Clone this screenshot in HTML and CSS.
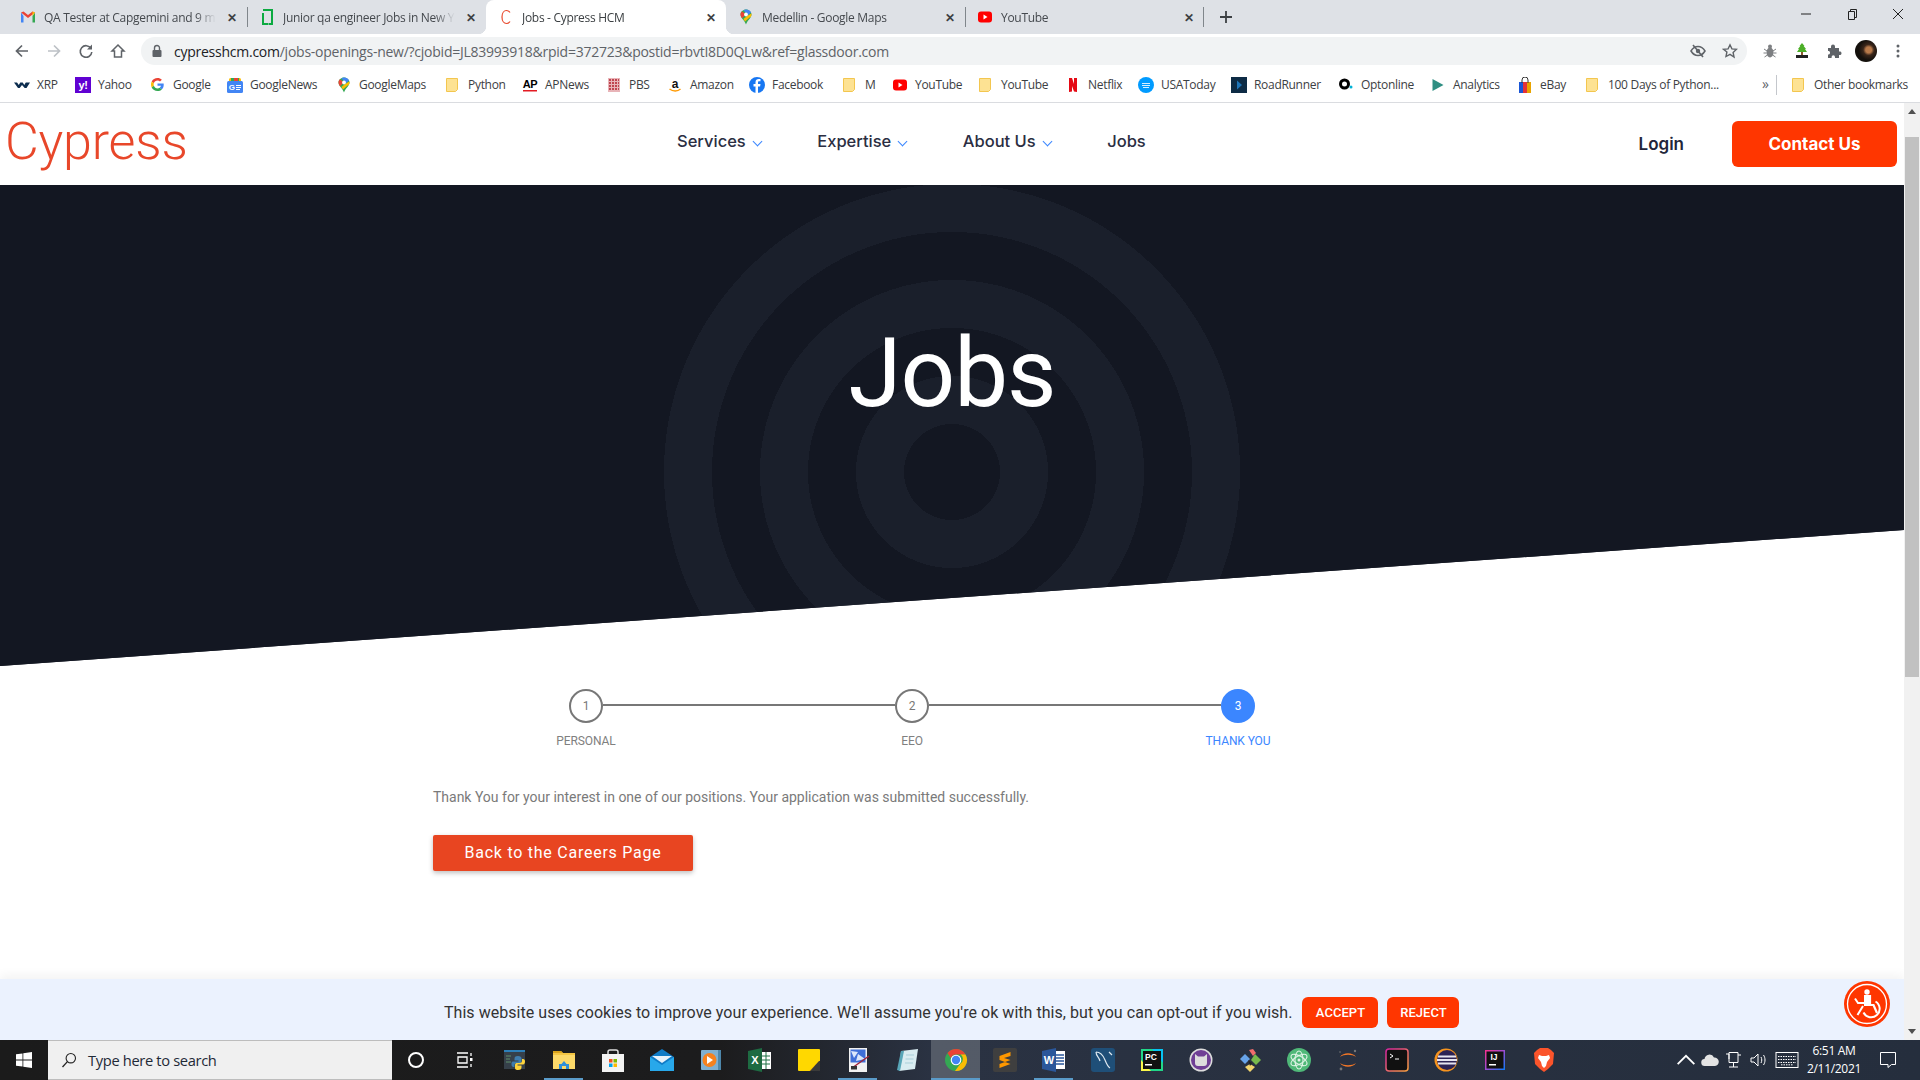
FILE: index.html
```html
<!DOCTYPE html>
<html lang="en">
<head>
    <meta charset="UTF-8">
    <title>Jobs - Cypress HCM</title>
    <link rel="stylesheet" href="styles.css">
</head>
<body>

<svg class="defs" width="0" height="0">
    <symbol id="folder" viewBox="0 0 16 16"><path d="M1.500 1.500h11v11l-2 2h-9z" fill="#fde293" stroke="#f3c64f"/></symbol>
    <symbol id="yt" viewBox="0 0 16 16"><rect x="1" y="2.500" width="14" height="11" rx="3" fill="#f00"/><path d="M6.500 5.500l4 2.500-4 2.500z" fill="#fff"/></symbol>
    <symbol id="gmaps" viewBox="0 0 16 16"><path d="M8 .5C5 .5 2.500 2.900 2.500 5.500c0 3.600 4 5.500 5.500 10 1.500-4.500 5.500-6.400 5.500-10C13.500 2.900 11 .5 8 .5z" fill="#34a853"/><path d="M3.900 2.300L8 5.500 4 9.200C3 7.800 2.500 6.700 2.500 5.500c0-1.300.5-2.300 1.400-3.200z" fill="#ea4335"/><path d="M5.500 1.200C6.200.7 7 .5 8 .5c2.400 0 4.300 1.300 5 3L9.800 6.400z" fill="#4285f4"/><path d="M5.400 10.100L9.800 6.400 13.300 4.500c.3.900.3 1.700-.2 2.800L7 12.500z" fill="#fbbc04"/><circle cx="8" cy="5.500" r="1.900" fill="#fff"/></symbol>
    <symbol id="g" viewBox="0 0 48 48"><path fill="#EA4335" d="M24 9.500c3.540 0 6.710 1.220 9.210 3.600l6.850-6.850C35.900 2.380 30.470 0 24 0 14.620 0 6.510 5.380 2.560 13.220l7.980 6.190C12.430 13.720 17.740 9.500 24 9.500z"/><path fill="#4285F4" d="M46.980 24.550c0-1.570-.15-3.090-.38-4.550H24v9.020h12.940c-.58 2.960-2.260 5.480-4.780 7.180l7.730 6c4.510-4.180 7.090-10.360 7.090-17.650z"/><path fill="#FBBC05" d="M10.530 28.590c-.48-1.450-.76-2.990-.76-4.590s.27-3.140.76-4.590l-7.980-6.190C.92 16.460 0 20.120 0 24c0 3.880.92 7.540 2.560 10.780l7.970-6.190z"/><path fill="#34A853" d="M24 48c6.480 0 11.930-2.130 15.890-5.810l-7.730-6c-2.150 1.450-4.920 2.300-8.160 2.300-6.260 0-11.570-4.220-13.470-9.910l-7.980 6.190C6.510 42.620 14.620 48 24 48z"/></symbol>
</svg>

<div class="screen">

    <div class="tabstrip">
        <div class="tab">
            <svg class="fav" viewBox="0 0 16 16"><path d="M1 3.500v10h2.500V7z" fill="#4285f4"/><path d="M12.500 7v6.500H15v-10z" fill="#34a853"/><path d="M1 3.500L8 9l7-5.500-2.500-1L8 6 3.500 2.500z" fill="#ea4335"/><path d="M12.500 2.500L15 3.500 12.500 7z" fill="#fbbc04"/></svg>
            <span class="tab-title">QA Tester at Capgemini and 9 m</span>
            <span class="tab-x">&#10005;</span>
        </div>
        <div class="tab sep-left">
            <svg class="fav" viewBox="0 0 16 16"><path d="M4 1h9v14H9.500M9 15H4V4" fill="none" stroke="#0caa41" stroke-width="2"/></svg>
            <span class="tab-title">Junior qa engineer Jobs in New Y</span>
            <span class="tab-x">&#10005;</span>
        </div>
        <div class="tab tab-active">
            <svg class="fav" viewBox="0 0 16 16"><path d="M12 3.500C11 2 9.800 1.500 8.500 1.500 6 1.500 4 4 4 8s2 6.500 4.500 6.500c1.300 0 2.500-.5 3.500-2" fill="none" stroke="#e8472a" stroke-width="1.200"/></svg>
            <span class="tab-title">Jobs - Cypress HCM</span>
            <span class="tab-x">&#10005;</span>
        </div>
        <div class="tab">
            <svg class="fav"><use href="#gmaps"/></svg>
            <span class="tab-title">Medellin - Google Maps</span>
            <span class="tab-x">&#10005;</span>
        </div>
        <div class="tab sep-left sep-right">
            <svg class="fav"><use href="#yt"/></svg>
            <span class="tab-title">YouTube</span>
            <span class="tab-x">&#10005;</span>
        </div>
        <svg class="new-tab" viewBox="0 0 14 14"><path d="M7 1v12M1 7h12" stroke="#3c4043" stroke-width="1.800"/></svg>
        <div class="win-controls">
            <svg viewBox="0 0 12 12"><path d="M1 6h10" stroke="#222" stroke-width="1"/></svg>
            <svg viewBox="0 0 12 12"><path d="M2.500 3.500h6v8h-6zM4.500 3.500v-2h6v8h-2" fill="none" stroke="#222"/></svg>
            <svg viewBox="0 0 12 12"><path d="M1 1l10 10M11 1L1 11" stroke="#222"/></svg>
        </div>
    </div>

    <div class="toolbar">
        <div class="tool"><svg viewBox="0 0 16 16"><path d="M14 8H3M8 2.500L2.500 8 8 13.500" fill="none" stroke="#5f6368" stroke-width="1.700"/></svg></div>
        <div class="tool"><svg viewBox="0 0 16 16"><path d="M2 8h11M8 2.500L13.500 8 8 13.500" fill="none" stroke="#bdc1c6" stroke-width="1.700"/></svg></div>
        <div class="tool"><svg viewBox="0 0 16 16"><path d="M13 5.500A5.800 5.800 0 1 0 13.800 9" fill="none" stroke="#5f6368" stroke-width="1.600"/><path d="M14 1.500v5H9z" fill="#5f6368"/></svg></div>
        <div class="tool"><svg viewBox="0 0 16 16"><path d="M8 2L2 8h2.500v6h7V8H14z" fill="none" stroke="#5f6368" stroke-width="1.500"/></svg></div>
        <div class="omnibox">
            <svg class="lock" viewBox="0 0 16 16"><rect x="3.500" y="7" width="9" height="7" rx="1" fill="#5f6368"/><path d="M5.500 7V5a2.500 2.500 0 0 1 5 0v2" fill="none" stroke="#5f6368" stroke-width="1.400"/></svg>
            <span class="url"><b>cypresshcm.com</b>/jobs-openings-new/?cjobid=JL83993918&amp;rpid=372723&amp;postid=rbvtI8D0QLw&amp;ref=glassdoor.com</span>
            <svg class="omni-icon first" viewBox="0 0 16 16"><path d="M1 8c1.800-3 4-4.500 7-4.500s5.200 1.500 7 4.500c-1.800 3-4 4.500-7 4.500S2.800 11 1 8z" fill="none" stroke="#5f6368" stroke-width="1.500"/><circle cx="8" cy="8" r="2.200" fill="#5f6368"/><path d="M3 2l10 12" stroke="#5f6368" stroke-width="1.600"/></svg>
            <svg class="omni-icon" viewBox="0 0 16 16"><path d="M8 1.800l1.900 4.100 4.500.5-3.300 3.100.9 4.500L8 11.300l-4 2.200.9-4.500L1.600 6.400l4.500-.5z" fill="none" stroke="#5f6368" stroke-width="1.400"/></svg>
        </div>
        <div class="tool"><svg viewBox="0 0 16 16"><ellipse cx="8" cy="9.500" rx="3.500" ry="5" fill="#7d7f82"/><circle cx="8" cy="3.500" r="2" fill="#7d7f82"/><path d="M2 6l3 2M14 6l-3 2M1.500 10h3M14.500 10h-3M2.500 14l3-2M13.500 14l-3-2" stroke="#7d7f82"/></svg></div>
        <div class="tool"><svg viewBox="0 0 16 16"><path d="M8 0l2.500 3H9.700l2.300 3h-1l2 3H3l2-3H4l2.300-3h-.8z" fill="#4caf28"/><rect x="7" y="9" width="2" height="3" fill="#8a5a2b"/><rect x="2" y="12" width="12" height="3" fill="#222"/></svg></div>
        <div class="tool"><svg viewBox="0 0 16 16"><path d="M2 5h3V3.500a2 2 0 0 1 4 0V5h4v3.500h1.500a2 2 0 0 1 0 3.500H13v3H9v-1a1.700 1.700 0 0 0-3.400 0v1H2v-3.500h1a2 2 0 0 0 0-3.500H2z" fill="#5f6368"/></svg></div>
        <div class="tool"><div class="avatar"></div></div>
        <div class="tool"><svg viewBox="0 0 16 16"><circle cx="8" cy="3" r="1.500" fill="#5f6368"/><circle cx="8" cy="8" r="1.500" fill="#5f6368"/><circle cx="8" cy="13" r="1.500" fill="#5f6368"/></svg></div>
    </div>

    <div class="bookmarks">
        <div class="bm"><svg viewBox="0 0 16 16"><path d="M0 5.500h3l1.800 2.500L6.300 5.500h2.400l1.600 2.500 1.500-2.500H16l-3.500 5.500h-1.800L8 8l-2.300 3H4z" fill="#0c2d4e"/></svg><span>XRP</span></div>
        <div class="bm"><svg viewBox="0 0 16 16"><rect width="16" height="16" fill="#6001d2"/><text x="8" y="12" font-size="11" text-anchor="middle" fill="#fff">y!</text></svg><span>Yahoo</span></div>
        <div class="bm"><svg viewBox="0 0 16 16"><use href="#g" x="1" y="1" width="13" height="13"/></svg><span>Google</span></div>
        <div class="bm"><svg viewBox="0 0 16 16"><path d="M2 5V2.500Q2 1 3.500 1h9Q14 1 14 2.500V5z" fill="#fbbc04"/><path d="M4 5V1h8v4z" fill="#34a853"/><path d="M7 4V1h4v3z" fill="#ea4335"/><rect y="4" width="16" height="12" rx="1.500" fill="#4285f4"/><text x="4.800" y="13" font-size="8" text-anchor="middle" fill="#fff">G</text><path d="M9 8.500h5M9 10.500h5M9 12.500h4" stroke="#fff"/></svg><span>GoogleNews</span></div>
        <div class="bm"><svg><use href="#gmaps"/></svg><span>GoogleMaps</span></div>
        <div class="bm"><svg><use href="#folder"/></svg><span>Python</span></div>
        <div class="bm"><svg viewBox="0 0 16 16"><text x="8" y="11" font-size="11" text-anchor="middle" fill="#000">AP</text><rect x="1" y="13" width="14" height="1.500" fill="#e31b23"/></svg><span>APNews</span></div>
        <div class="bm"><svg viewBox="0 0 16 16"><rect x="2" y="1" width="12" height="14" fill="#e8b4b8"/><path d="M3 3h10M3 6h10M3 9h10M3 12h10" stroke="#b3202d" stroke-width="1.500" stroke-dasharray="2 1"/></svg><span>PBS</span></div>
        <div class="bm"><svg viewBox="0 0 16 16"><text x="8" y="10.500" font-size="12" text-anchor="middle" fill="#111">a</text><path d="M2.500 12c3.500 2.500 8 2.500 11 0" fill="none" stroke="#f90" stroke-width="1.500"/></svg><span>Amazon</span></div>
        <div class="bm"><svg viewBox="0 0 16 16"><circle cx="8" cy="8" r="8" fill="#1877f2"/><path d="M9 16V9.500h2.100l.4-2.500H9V5.500c0-.8.3-1.200 1.200-1.200h1.300V2.100C11 2 10.400 2 9.800 2 7.800 2 6.500 3.200 6.500 5.200V7H4.500v2.500h2V16z" fill="#fff"/></svg><span>Facebook</span></div>
        <div class="bm"><svg><use href="#folder"/></svg><span>M</span></div>
        <div class="bm"><svg><use href="#yt"/></svg><span>YouTube</span></div>
        <div class="bm"><svg><use href="#folder"/></svg><span>YouTube</span></div>
        <div class="bm"><svg viewBox="0 0 16 16"><path d="M4 1h3l2 6V1h3v14l-3-.5L7 9v5.500L4 15z" fill="#e50914"/></svg><span>Netflix</span></div>
        <div class="bm"><svg viewBox="0 0 16 16"><circle cx="8" cy="8" r="8" fill="#009bff"/><path d="M4 6.500h8M4 8.500h8M5 10.500h6" stroke="#d6efff"/></svg><span>USAToday</span></div>
        <div class="bm"><svg viewBox="0 0 16 16"><rect width="16" height="16" fill="#0d2b45"/><path d="M6 3.500l5 4.500-5 4.500z" fill="#1d74b8"/></svg><span>RoadRunner</span></div>
        <div class="bm"><svg viewBox="0 0 16 16"><circle cx="6.500" cy="7" r="4" fill="none" stroke="#000" stroke-width="3"/><circle cx="13" cy="10" r="1.500" fill="#00b2d6"/></svg><span>Optonline</span></div>
        <div class="bm"><svg viewBox="0 0 16 16"><path d="M2.500 2l11 6-11 6z" fill="#2f8f83"/></svg><span>Analytics</span></div>
        <div class="bm"><svg viewBox="0 0 16 16"><rect x="2" y="5" width="4" height="11" fill="#1a56d6"/><rect x="6" y="5" width="4" height="11" fill="#e53238"/><rect x="10" y="5" width="4" height="11" fill="#e9a400"/><path d="M5 6V3a3 3 0 0 1 6 0v3" fill="none" stroke="#333"/></svg><span>eBay</span></div>
        <div class="bm"><svg><use href="#folder"/></svg><span>100 Days of Python...</span></div>
        <div class="bm-more">&raquo;</div>
        <div class="bm-sep"></div>
        <div class="bm"><svg><use href="#folder"/></svg><span>Other bookmarks</span></div>
    </div>

    <div class="viewport">
        <div class="page">
            <header class="site-header">
                <a class="logo">Cypress</a>
                <nav class="site-nav">
                    <a>Services<i class="caret"></i></a>
                    <a>Expertise<i class="caret"></i></a>
                    <a>About Us<i class="caret"></i></a>
                    <a>Jobs</a>
                </nav>
                <a class="login">Login</a>
                <a class="btn-contact">Contact Us</a>
            </header>

            <section class="hero">
                <h1>Jobs</h1>
            </section>

            <main class="content">
                <div class="stepper">
                    <div class="step-track">
                        <span class="step-dot">1</span>
                        <span class="step-line"></span>
                        <span class="step-dot">2</span>
                        <span class="step-line"></span>
                        <span class="step-dot current">3</span>
                    </div>
                    <div class="step-labels">
                        <span>PERSONAL</span>
                        <span>EEO</span>
                        <span class="current">THANK YOU</span>
                    </div>
                </div>
                <p class="thanks">Thank You for your interest in one of our positions. Your application was submitted successfully.</p>
                <a class="btn-back">Back to the Careers Page</a>
            </main>

            <div class="cookie-bar">
                <span>This website uses cookies to improve your experience. We'll assume you're ok with this, but you can opt-out if you wish.</span>
                <a class="cookie-btn accept">ACCEPT</a>
                <a class="cookie-btn">REJECT</a>
            </div>

            <div class="a11y">
                <svg viewBox="0 0 46 46">
                    <circle cx="23" cy="23" r="23" fill="#ff3600"/>
                    <circle cx="23" cy="23" r="19.500" fill="none" stroke="#fff" stroke-width="1.300"/>
                    <circle cx="23" cy="11" r="2.700" fill="#fff"/>
                    <path d="M20 15h6v9h3.500l3.500 8" fill="none" stroke="#fff" stroke-width="2.200"/>
                    <path d="M20 15h5v10h-5z" fill="#fff"/>
                    <path d="M11 17.500l3 4.500h6M19 25l-5.500 9" fill="none" stroke="#fff" stroke-width="2"/>
                    <path d="M31.500 20.500a8.500 8.500 0 1 1-12 11" fill="none" stroke="#fff" stroke-width="2"/>
                </svg>
            </div>
        </div>
        <div class="scrollbar">
            <span class="arrow-up"></span>
            <div class="scroll-track"><div class="scroll-thumb"></div></div>
            <span class="arrow-down"></span>
        </div>
    </div>

    <div class="taskbar">
        <div class="start"><svg viewBox="0 0 16 16"><path d="M0 2.300l6.500-.9v6.200H0zM7.300 1.300L16 0v7.600H7.300zM0 8.400h6.500v6.200L0 13.700zM7.300 8.400H16V16l-8.700-1.200z" fill="#fff"/></svg></div>
        <div class="search">
            <svg viewBox="0 0 16 16"><circle cx="9.800" cy="6.200" r="4.700" fill="none" stroke="#222" stroke-width="1.100"/><path d="M6.400 9.600L1.500 15" stroke="#222" stroke-width="1.300"/></svg>
            <span>Type here to search</span>
        </div>
        <div class="task-apps">
            <div class="app"><svg viewBox="0 0 24 24"><circle cx="12" cy="12" r="7" fill="none" stroke="#fff" stroke-width="2"/></svg></div>
            <div class="app spaced"><svg viewBox="0 0 24 24"><path d="M5 5h11M5 19h11M6 9h9v6H6zM19 5v3M19 16v3" fill="none" stroke="#fff" stroke-width="1.300"/><rect x="18" y="10" width="2.500" height="3" fill="#fff"/></svg></div>
            <div class="app"><svg viewBox="0 0 24 24"><rect x="1" y="2" width="21" height="19" fill="#36404a"/><rect x="1" y="2" width="21" height="2" fill="#2d7fb8"/><path d="M3 8h5M3 11h4M3 14h5" stroke="#5e8f6a"/><path d="M15 8c-3 0-3.500 1-3.500 3v1.500h4v1h-5.500c-1.500 0-1.500 1.500-1.500 3s.7 2.500 2 2.500h1v-2c0-1 1-2 2.500-2h3c1 0 1.500-1 1.500-2v-2.500C18.500 9 17.500 8 15 8z" fill="#3f7cad"/><path d="M15 22c3 0 3.500-1 3.500-3v-1.500h-4v-1h5.500c1.500 0 2-1.500 2-3s-.7-2.500-2-2.500h-1v2c0 1-1 2-2.500 2h-3c-1 0-1.500 1-1.500 2V20c0 1.500 1 2 3.500 2z" fill="#ffd43b"/></svg></div>
            <div class="app running"><svg viewBox="0 0 24 24"><path d="M1 3h8l2 2h12v16H1z" fill="#f4c542"/><path d="M1 3h8l2 2H1z" fill="#d9a21b"/><path d="M1 7h22v14H1z" fill="#fcd969"/><path d="M7 21v-5h2.500l2.500-3 2.500 3H17v5h-3v-3h-4v3z" fill="#2f8fd8"/></svg></div>
            <div class="app"><svg viewBox="0 0 24 24"><path d="M7 7V4a2 2 0 0 1 2-2h6a2 2 0 0 1 2 2v3" fill="none" stroke="#ddd" stroke-width="1.500"/><rect x="1" y="6" width="22" height="18" fill="#f3f3f3"/><rect x="8" y="11" width="3.500" height="3.500" fill="#f25022"/><rect x="12.500" y="11" width="3.500" height="3.500" fill="#7fba00"/><rect x="8" y="15.500" width="3.500" height="3.500" fill="#00a4ef"/><rect x="12.500" y="15.500" width="3.500" height="3.500" fill="#ffb900"/></svg></div>
            <div class="app"><svg viewBox="0 0 24 24"><path d="M0 9l12-8 12 8v14H0z" fill="#0f7bc6"/><path d="M0 9l12 8 12-8v14H0z" fill="#28a8ea"/><path d="M2 8h20l-10 7z" fill="#e6f2fb"/></svg></div>
            <div class="app"><svg viewBox="0 0 24 24"><rect x="2" y="2" width="20" height="20" rx="1" fill="#7fb0d1"/><rect x="19" y="2" width="3" height="20" fill="#4e87ab"/><circle cx="10.500" cy="12" r="7" fill="#f5821f"/><path d="M8 8l6 4-6 4z" fill="#fff"/></svg></div>
            <div class="app"><svg viewBox="0 0 24 24"><rect x="13" y="4" width="10" height="17" fill="#fff"/><path d="M14 8h8M14 12h8M14 16h8M18 4v17" stroke="#217346"/><path d="M0 3l14-3v24L0 21z" fill="#1e6b42"/><text x="7" y="16" font-size="11" text-anchor="middle" fill="#fff">X</text></svg></div>
            <div class="app"><svg viewBox="0 0 24 24"><rect x="1" y="1" width="22" height="22" rx="1" fill="#ffd800"/><path d="M23 12v10a1 1 0 0 1-1 1H12z" fill="#ffb900"/><path d="M22 13l-9 10h10V13z" fill="#3a3a3a"/></svg></div>
            <div class="app running split"><svg viewBox="0 0 24 24"><rect x="3" y="0" width="18" height="24" fill="#f2f2f2"/><rect x="4.500" y="1.500" width="15" height="13" fill="#3f6fd8"/><path d="M5 3l7 1-4 6zM12 6l7 5-9 2z" fill="#dbe7fb"/><path d="M6 20L23 8" stroke="#a02338" stroke-width="1.500"/><rect x="5" y="18" width="6" height="3.500" fill="#333"/></svg></div>
            <div class="app"><svg viewBox="0 0 24 24"><path d="M6 3l17-2-3 20-16 2z" fill="#d9ecf1"/><path d="M6 3L2 22l3 1 4-20z" fill="#58a6b8"/><path d="M11 7h8M10.500 11h8M10 15h8" stroke="#a9cfd9"/></svg></div>
            <div class="app active"><svg viewBox="0 0 24 24"><circle cx="12" cy="12" r="11" fill="#34a853"/><path d="M12 1a11 11 0 0 1 9.500 5.500H12a5.500 5.500 0 0 0-5.200 3.700L3.500 5A11 11 0 0 1 12 1z" fill="#ea4335"/><path d="M21.500 6.500A11 11 0 0 1 11 23l5.500-7.500a5.500 5.500 0 0 0 .2-9z" fill="#fbbc04"/><circle cx="12" cy="12" r="5.300" fill="#fff"/><circle cx="12" cy="12" r="4.200" fill="#4285f4"/></svg></div>
            <div class="app"><svg viewBox="0 0 24 24"><rect width="24" height="24" rx="2" fill="#3f3f3f"/><path d="M17.500 4L6.500 8v4l11 4v-4L11 10l6.500-2zM6.500 12l11-4v0M6.500 16l11-4v4L6.500 20z" fill="#ff9800"/></svg></div>
            <div class="app running"><svg viewBox="0 0 24 24"><rect x="11" y="3" width="12" height="18" fill="#fff"/><path d="M14 7h8M14 10h8M14 13h8M14 16h8" stroke="#2b579a" stroke-width="1.300"/><path d="M0 3l14-3v24L0 21z" fill="#2b579a"/><text x="7" y="16" font-size="11" text-anchor="middle" fill="#fff">W</text></svg></div>
            <div class="app"><svg viewBox="0 0 24 24"><rect width="24" height="24" rx="3" fill="#1f4f78"/><path d="M5 4c4 0 7 3 9 8s3 7 5 8M5 4c0 4 3 5 4 9M18 4l3 3" fill="none" stroke="#dfe9f0" stroke-width="1.200"/></svg></div>
            <div class="app"><svg viewBox="0 0 24 24"><path d="M1 1h14l8 5v17H8l-7-4z" fill="#21d789"/><path d="M12 1h11v14z" fill="#07c3f2"/><path d="M1 12v11h10z" fill="#fcf84a"/><rect x="3" y="3" width="18" height="18" fill="#111"/><text x="11" y="12" font-size="8.500" text-anchor="middle" fill="#fff">PC</text><rect x="5" y="16" width="7" height="1.500" fill="#fff"/></svg></div>
            <div class="app"><svg viewBox="0 0 24 24"><circle cx="12" cy="12" r="11.500" fill="#ddd"/><circle cx="12" cy="12" r="10" fill="#6f3f95"/><path d="M6 6l3 2.500h6L18 6v9q0 3-3 3H9q-3 0-3-3z" fill="#ddd"/></svg></div>
            <div class="app"><svg viewBox="0 0 24 24"><path d="M11 2l4-1 3 4-3 3z" fill="#f26d6d"/><path d="M7 6l5 5-5 5-5-5z" fill="#68a4ea"/><path d="M17 6l6 6-5 5-5-5z" fill="#79b94c"/><path d="M12 16l5 3-5 5-5-5z" fill="#f2d46c"/><path d="M10 12l4 3-2 3z" fill="#222"/></svg></div>
            <div class="app"><svg viewBox="0 0 24 24"><circle cx="12" cy="12" r="12" fill="#4fb878"/><g fill="none" stroke="#dff3e6" stroke-width="1.100"><ellipse cx="12" cy="12" rx="4" ry="9"/><ellipse cx="12" cy="12" rx="4" ry="9" transform="rotate(60 12 12)"/><ellipse cx="12" cy="12" rx="4" ry="9" transform="rotate(-60 12 12)"/></g><circle cx="12" cy="12" r="1.500" fill="#dff3e6"/></svg></div>
            <div class="app"><svg viewBox="0 0 24 24"><path d="M4 9c3-5 13-5 16 0-4-3-12-3-16 0zM4 15c3 5 13 5 16 0-4 3-12 3-16 0z" fill="#f37726"/><circle cx="19" cy="3" r="1.200" fill="#767677"/><circle cx="5" cy="21" r="1.400" fill="#767677"/><circle cx="4" cy="4" r=".8" fill="#767677"/></svg></div>
            <div class="app"><svg viewBox="0 0 24 24"><defs><linearGradient id="term" x1="0" y1="0" x2="1" y2="1"><stop offset="0" stop-color="#d6249f"/><stop offset="1" stop-color="#f9a03f"/></linearGradient></defs><rect x="1" y="1" width="22" height="22" rx="3" fill="#111" stroke="url(#term)" stroke-width="1.500"/><path d="M5 6l3 2-3 2M10 11h4" fill="none" stroke="#fff"/></svg></div>
            <div class="app"><svg viewBox="0 0 24 24"><circle cx="12" cy="12" r="11.500" fill="#f7941e"/><circle cx="13" cy="12" r="10" fill="#2c2255"/><path d="M4 8.500h18M3 12h20M4 15.500h18" stroke="#e6e4f0" stroke-width="2"/></svg></div>
            <div class="app"><svg viewBox="0 0 24 24"><defs><linearGradient id="ij" x1="0" y1="0" x2="1" y2="1"><stop offset="0" stop-color="#fc318c"/><stop offset=".5" stop-color="#9c4dd4"/><stop offset="1" stop-color="#087cfa"/></linearGradient></defs><rect x="2" y="2" width="20" height="20" fill="url(#ij)"/><rect x="3.500" y="3.500" width="17" height="17" fill="#111"/><text x="11" y="12" font-size="8.500" text-anchor="middle" fill="#fff">IJ</text><rect x="6" y="16" width="7" height="1.500" fill="#fff"/></svg></div>
            <div class="app"><svg viewBox="0 0 24 24"><path d="M5 2L8 0h8l3 2 3 3-1 11-5 5-4 3-4-3-5-5L2 5z" fill="#fb542b"/><path d="M7 7l3 1h4l3-1 1 3-3 4-1 4-2 2-2-2-1-4-3-4z" fill="#fff"/></svg></div>
        </div>
        <div class="tray">
            <svg class="tray-up" viewBox="0 0 12 12"><path d="M1 8.500L6 3.500l5 5" fill="none" stroke="#fff" stroke-width="1.100"/></svg>
            <svg viewBox="0 0 20 20"><path d="M5 16a3.500 3.500 0 0 1-.5-7A5 5 0 0 1 14 7.500a4.200 4.200 0 0 1 1 8.500z" fill="#e3e3e3"/></svg>
            <svg viewBox="0 0 20 20"><path d="M5 2.500h9v10H5zM14 5h3M9.500 12.500V17M5 17h9M2 4h3v5" fill="none" stroke="#fff"/></svg>
            <svg viewBox="0 0 20 20"><path d="M3 8v4h3l4 4V4L6 8z" fill="none" stroke="#fff"/><path d="M13 7c1 2 1 4 0 6M15.500 5c2 3 2 7 0 10" fill="none" stroke="#fff"/></svg>
            <svg class="tray-kb" viewBox="0 0 24 20"><rect x="1" y="2.500" width="22" height="15" fill="none" stroke="#fff"/><path d="M3 6.500h18M3 9.500h18M3 12.500h18M6 14.800h12" stroke="#fff" stroke-dasharray="1.500 1"/></svg>
        </div>
        <div class="clock">
            <span>6:51 AM</span>
            <span>2/11/2021</span>
        </div>
        <svg class="notif" viewBox="0 0 20 20"><path d="M2.500 2.500h15v12h-4l-3.500 3v-3h-7.500z" fill="none" stroke="#fff"/></svg>
    </div>

</div>

</body>
</html>
```

FILE: styles.css
```css
html, body {
    margin: 0;
    padding: 0;
}

body {
    font-family: 'Open Sans', 'Noto Sans', sans-serif;
    background-color: #fff;
}

a {
    text-decoration: none;
}

svg text {
    font-family: 'Liberation Sans', sans-serif;
    font-weight: 700;
}

.defs {
    display: none;
}

.screen {
    width: 1920px;
    height: 1080px;
    overflow: hidden;
    display: flex;
    flex-direction: column;
}

/* browser tabs */
.tabstrip {
    height: 34px;
    flex: none;
    display: flex;
    align-items: center;
    padding-left: 8px;
    background-color: #dee1e6;
    box-sizing: border-box;
}

.tab {
    position: relative;
    width: 239px;
    height: 34px;
    flex: none;
    display: flex;
    align-items: center;
    padding: 0 5px 0 20px;
    box-sizing: border-box;
    font-size: 12px;
    letter-spacing: -0.3px;
    color: #45494e;
}

.fav {
    width: 16px;
    height: 16px;
    flex: none;
    margin-left: -8px;
}

.tab-title {
    flex: 1;
    min-width: 0;
    margin-left: 8px;
    white-space: nowrap;
    overflow: hidden;
    mask-image: linear-gradient(90deg, #000 88%, transparent 100%);
}

.tab-x {
    width: 20px;
    flex: none;
    margin-left: 6px;
    text-align: center;
    font-size: 12px;
    font-weight: 700;
    color: #3c4043;
}

.sep-left::before,
.sep-right::after {
    content: "";
    position: absolute;
    top: 7px;
    bottom: 7px;
    width: 1px;
    background-color: #80868b;
}

.sep-left::before {
    left: 0;
}

.sep-right::after {
    right: 0;
}

.tab-active {
    background-color: #fff;
    border-radius: 8px 8px 0 0;
    width: 240px;
    color: #3c4043;
}

.tab-active::before,
.tab-active::after {
    content: "";
    position: absolute;
    bottom: 0;
    width: 8px;
    height: 8px;
}

.tab-active::before {
    left: -8px;
    background: radial-gradient(circle at 0 0, transparent 8px, #fff 8.5px);
}

.tab-active::after {
    right: -8px;
    background: radial-gradient(circle at 100% 0, transparent 8px, #fff 8.5px);
}

.new-tab {
    width: 14px;
    height: 14px;
    margin-left: 15px;
}

.win-controls {
    margin-left: auto;
    display: flex;
    align-items: center;
    gap: 34px;
    padding-right: 16px;
    margin-top: -6px;
}

.win-controls svg {
    width: 12px;
    height: 12px;
}

/* toolbar */
.toolbar {
    height: 34px;
    flex: none;
    display: flex;
    align-items: center;
    padding-left: 6px;
    background-color: #fff;
}

.tool {
    width: 32px;
    height: 32px;
    flex: none;
    display: flex;
    align-items: center;
    justify-content: center;
}

.tool svg {
    width: 16px;
    height: 16px;
}

.omnibox {
    width: 1606px;
    height: 28px;
    flex: none;
    margin: 0 7px 0 7px;
    border-radius: 14px;
    background-color: #f1f3f4;
    display: flex;
    align-items: center;
    padding: 0 9px 0 8px;
    box-sizing: border-box;
}

.lock {
    width: 16px;
    height: 16px;
    flex: none;
}

.url {
    margin-left: 9px;
    font-size: 14px;
    letter-spacing: -0.25px;
    color: #5f6368;
    white-space: nowrap;
}

.url b {
    font-weight: 400;
    color: #202124;
}

.omni-icon {
    width: 16px;
    height: 16px;
    flex: none;
    margin-left: 16px;
}

.omni-icon.first {
    margin-left: auto;
}

.avatar {
    width: 22px;
    height: 22px;
    border-radius: 50%;
    background: radial-gradient(circle at 62% 45%, #b97a4a 0 16%, #3a261a 30%, #14100c 55%);
}

/* bookmarks use fixed tracks so the labels keep the spacing of the chrome font */
.bookmarks {
    height: 33px;
    padding-bottom: 1px;
    flex: none;
    display: grid;
    grid-template-columns: 61px 75px 77px 109px 109px 77px 84px 61px 82px 93px 50px 86px 87px 73px 93px 107px 92px 87px 68px 177px 14px 15px 1fr;
    align-items: center;
    padding-left: 14px;
    background-color: #fff;
    border-bottom: 1px solid #dadce0;
    box-sizing: content-box;
    font-size: 12px;
    letter-spacing: -0.3px;
    color: #3c4043;
}

.bm {
    display: flex;
    align-items: center;
    gap: 7px;
    white-space: nowrap;
}

.bm svg {
    width: 16px;
    height: 16px;
    flex: none;
}

.bm-more {
    font-size: 14px;
    color: #5f6368;
    margin-top: -2px;
}

.bm-sep {
    width: 1px;
    height: 20px;
    background-color: #c4c7cc;
}

/* page area */
.viewport {
    flex: 1;
    min-height: 0;
    display: flex;
}

.page {
    position: relative;
    flex: 1;
    min-width: 0;
    overflow: hidden;
    background-color: #fff;
}

.site-header {
    height: 82px;
    display: flex;
    align-items: center;
    padding: 0 7px 0 5px;
}

.logo {
    width: 672px;
    flex: none;
    padding-bottom: 5px;
    font-family: Roboto, sans-serif;
    font-size: 52px;
    font-weight: 300;
    letter-spacing: -0.2px;
    color: #e8472a;
}

.site-nav {
    display: flex;
    gap: 56.5px;
    padding-bottom: 6px;
}

.site-nav a {
    font-family: Inter, sans-serif;
    font-size: 16.5px;
    font-weight: 500;
    color: #2b2e42;
}

.caret {
    display: inline-block;
    width: 6px;
    height: 6px;
    margin-left: 8px;
    border-right: 1.200px solid #3b86ff;
    border-bottom: 1.200px solid #3b86ff;
    transform: translateY(-2px) rotate(45deg);
}

.login {
    margin-left: auto;
    margin-right: 48px;
    font-family: Inter, sans-serif;
    font-size: 17px;
    font-weight: 600;
    color: #22253a;
}

.btn-contact {
    width: 165px;
    height: 46px;
    border-radius: 6px;
    background-color: #ff3600;
    display: flex;
    align-items: center;
    justify-content: center;
    font-family: Inter, sans-serif;
    font-size: 17px;
    font-weight: 700;
    color: #fff;
}

.hero {
    height: 481px;
    box-sizing: border-box;
    padding-top: 128px;
    clip-path: polygon(0 0, 100% 0, 100% 345px, 0 100%);
    background-color: #131722;
    background-image: radial-gradient(circle at 952px 287px,
        #131722 0 48px, #1a1f2b 48px 96px,
        #131722 96px 144px, #1a1f2b 144px 192px,
        #131722 192px 240px, #1a1f2b 240px 288px,
        #131722 288px);
}

.hero h1 {
    margin: 0;
    text-align: center;
    font-family: Roboto, sans-serif;
    font-size: 96px;
    font-weight: 400;
    letter-spacing: -1px;
    line-height: 120px;
    color: #fff;
}

.content {
    padding: 23px 0 0 433px;
    font-family: Roboto, sans-serif;
}

.stepper {
    margin-left: 103px;
}

.step-track {
    display: flex;
    align-items: center;
    padding-left: 33px;
}

.step-dot {
    width: 34px;
    height: 34px;
    flex: none;
    box-sizing: border-box;
    border: 2px solid #777;
    border-radius: 50%;
    display: flex;
    align-items: center;
    justify-content: center;
    font-size: 12px;
    color: #777;
}

.step-dot.current {
    border-color: #3b86ff;
    background-color: #3b86ff;
    color: #fff;
}

.step-line {
    width: 292px;
    height: 2px;
    margin-top: -2px;
    background-color: #777;
}

.step-labels {
    display: grid;
    grid-template-columns: repeat(3, 100px);
    column-gap: 226px;
    margin-top: 11px;
    text-align: center;
    font-size: 12px;
    letter-spacing: -0.1px;
    line-height: 14px;
    color: #808080;
}

.step-labels .current {
    color: #3b86ff;
}

.thanks {
    margin: 39px 0 28px;
    font-size: 14px;
    letter-spacing: -0.01px;
    line-height: 20px;
    color: #7a7a7a;
}

.btn-back {
    width: 260px;
    height: 36px;
    padding-bottom: 1px;
    box-sizing: border-box;
    border-radius: 2px;
    background-color: #e84521;
    box-shadow: 0 2px 5px rgba(0, 0, 0, 0.26);
    display: flex;
    align-items: center;
    justify-content: center;
    font-size: 16px;
    letter-spacing: 0.75px;
    color: #fff;
}

.cookie-bar {
    position: absolute;
    left: 0;
    right: 0;
    bottom: 0;
    height: 61px;
    box-sizing: border-box;
    padding: 6px 0 0 444px;
    display: flex;
    align-items: center;
    background-color: #ebf2fe;
    box-shadow: 0 -4px 10px rgba(0, 0, 0, 0.05);
    font-family: Roboto, sans-serif;
    font-size: 16px;
    letter-spacing: 0.04px;
    color: #333;
}

.cookie-btn {
    width: 72px;
    height: 31px;
    margin-left: 9px;
    border-radius: 6px;
    background-color: #ff3600;
    display: flex;
    align-items: center;
    justify-content: center;
    font-size: 13px;
    font-weight: 500;
    color: #fff;
}

.cookie-btn.accept {
    width: 76px;
    margin-left: 10px;
}

.a11y {
    position: absolute;
    right: 14px;
    bottom: 13px;
    width: 46px;
    height: 46px;
}

.a11y svg {
    display: block;
    width: 46px;
    height: 46px;
}

.scrollbar {
    width: 16px;
    flex: none;
    display: flex;
    flex-direction: column;
    align-items: center;
    background-color: #f1f1f1;
}

.arrow-up,
.arrow-down {
    width: 0;
    height: 0;
    flex: none;
    margin: 6px 0;
    border-left: 4px solid transparent;
    border-right: 4px solid transparent;
}

.arrow-up {
    border-bottom: 5px solid #505050;
}

.arrow-down {
    border-top: 5px solid #505050;
}

.scroll-track {
    flex: 1;
    width: 100%;
    padding-top: 17px;
}

.scroll-thumb {
    width: 14px;
    height: 540px;
    margin-left: 1px;
    background-color: #c1c1c1;
}

/* windows taskbar */
.taskbar {
    height: 40px;
    flex: none;
    display: flex;
    align-items: stretch;
    background: linear-gradient(90deg, #1b1b1b 0, #1c1c1d 720px, #2a3242 930px, #252e3d 100%);
    color: #fff;
}

.start {
    width: 48px;
    flex: none;
    display: flex;
    align-items: center;
    justify-content: center;
}

.start svg {
    width: 16px;
    height: 16px;
}

.search {
    width: 344px;
    flex: none;
    box-sizing: border-box;
    display: flex;
    align-items: center;
    gap: 11px;
    padding-left: 13px;
    background-color: #f0f0f0;
    border-top: 1px solid #bdbdbd;
    border-bottom: 1px solid #bdbdbd;
    font-size: 14.7px;
    letter-spacing: -0.35px;
    color: #1f2a37;
}

.search svg {
    width: 16px;
    height: 16px;
}

.task-apps {
    display: flex;
}

.app {
    position: relative;
    width: 49px;
    flex: none;
    display: flex;
    align-items: center;
    justify-content: center;
}

.app svg {
    width: 24px;
    height: 24px;
}

.app:nth-child(1),
.app:nth-child(2) {
    width: 48px;
}

.app.spaced {
    margin-right: 2px;
}

.app.running::after,
.app.active::after {
    content: "";
    position: absolute;
    left: 5px;
    right: 5px;
    bottom: 0;
    height: 2px;
    background-color: #5a9bc9;
}

.app.active {
    background-color: rgba(255, 255, 255, 0.2);
}

.app.active::after {
    left: 0;
    right: 0;
}

.tray {
    margin-left: auto;
    display: flex;
    align-items: center;
    gap: 4px;
}

.tray svg {
    width: 20px;
    height: 20px;
    flex: none;
}

.tray .tray-kb {
    width: 24px;
    margin-left: 3px;
}

.clock {
    width: 70px;
    flex: none;
    display: flex;
    flex-direction: column;
    align-items: center;
    justify-content: center;
    font-size: 12px;
    letter-spacing: -0.3px;
    line-height: 18px;
}

.notif {
    width: 20px;
    height: 20px;
    flex: none;
    align-self: center;
    margin: 0 22px 0 9px;
}
```
